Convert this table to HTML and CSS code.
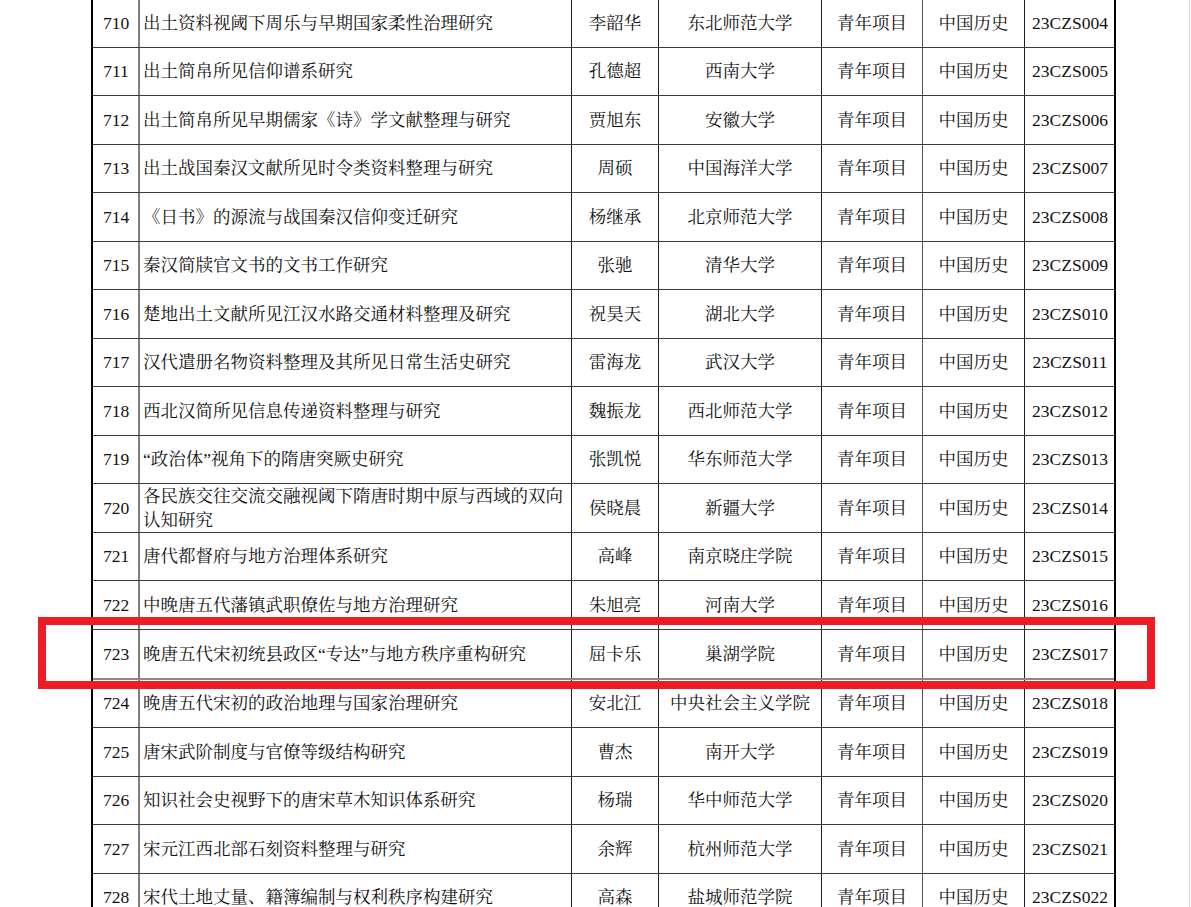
FILE: index.html
```html
<!DOCTYPE html>
<html lang="zh-CN">
<head>
<meta charset="utf-8">
<title>立项名单</title>
<link rel="stylesheet" href="styles.css">
</head>
<body>
<div class="page">
  <div class="sheet">
    <div class="row"><div class="c num">710</div><div class="c title">出土资料视阈下周乐与早期国家柔性治理研究</div><div class="c name">李韶华</div><div class="c org">东北师范大学</div><div class="c type">青年项目</div><div class="c subj">中国历史</div><div class="c code">23CZS004</div></div>
    <div class="row"><div class="c num">711</div><div class="c title">出土简帛所见信仰谱系研究</div><div class="c name">孔德超</div><div class="c org">西南大学</div><div class="c type">青年项目</div><div class="c subj">中国历史</div><div class="c code">23CZS005</div></div>
    <div class="row"><div class="c num">712</div><div class="c title">出土简帛所见早期儒家《诗》学文献整理与研究</div><div class="c name">贾旭东</div><div class="c org">安徽大学</div><div class="c type">青年项目</div><div class="c subj">中国历史</div><div class="c code">23CZS006</div></div>
    <div class="row"><div class="c num">713</div><div class="c title">出土战国秦汉文献所见时令类资料整理与研究</div><div class="c name">周硕</div><div class="c org">中国海洋大学</div><div class="c type">青年项目</div><div class="c subj">中国历史</div><div class="c code">23CZS007</div></div>
    <div class="row"><div class="c num">714</div><div class="c title">《日书》的源流与战国秦汉信仰变迁研究</div><div class="c name">杨继承</div><div class="c org">北京师范大学</div><div class="c type">青年项目</div><div class="c subj">中国历史</div><div class="c code">23CZS008</div></div>
    <div class="row"><div class="c num">715</div><div class="c title">秦汉简牍官文书的文书工作研究</div><div class="c name">张驰</div><div class="c org">清华大学</div><div class="c type">青年项目</div><div class="c subj">中国历史</div><div class="c code">23CZS009</div></div>
    <div class="row"><div class="c num">716</div><div class="c title">楚地出土文献所见江汉水路交通材料整理及研究</div><div class="c name">祝昊天</div><div class="c org">湖北大学</div><div class="c type">青年项目</div><div class="c subj">中国历史</div><div class="c code">23CZS010</div></div>
    <div class="row"><div class="c num">717</div><div class="c title">汉代遣册名物资料整理及其所见日常生活史研究</div><div class="c name">雷海龙</div><div class="c org">武汉大学</div><div class="c type">青年项目</div><div class="c subj">中国历史</div><div class="c code">23CZS011</div></div>
    <div class="row"><div class="c num">718</div><div class="c title">西北汉简所见信息传递资料整理与研究</div><div class="c name">魏振龙</div><div class="c org">西北师范大学</div><div class="c type">青年项目</div><div class="c subj">中国历史</div><div class="c code">23CZS012</div></div>
    <div class="row"><div class="c num">719</div><div class="c title">“政治体”视角下的隋唐突厥史研究</div><div class="c name">张凯悦</div><div class="c org">华东师范大学</div><div class="c type">青年项目</div><div class="c subj">中国历史</div><div class="c code">23CZS013</div></div>
    <div class="row"><div class="c num">720</div><div class="c title">各民族交往交流交融视阈下隋唐时期中原与西域的双向认知研究</div><div class="c name">侯晓晨</div><div class="c org">新疆大学</div><div class="c type">青年项目</div><div class="c subj">中国历史</div><div class="c code">23CZS014</div></div>
    <div class="row"><div class="c num">721</div><div class="c title">唐代都督府与地方治理体系研究</div><div class="c name">高峰</div><div class="c org">南京晓庄学院</div><div class="c type">青年项目</div><div class="c subj">中国历史</div><div class="c code">23CZS015</div></div>
    <div class="row"><div class="c num">722</div><div class="c title">中晚唐五代藩镇武职僚佐与地方治理研究</div><div class="c name">朱旭亮</div><div class="c org">河南大学</div><div class="c type">青年项目</div><div class="c subj">中国历史</div><div class="c code">23CZS016</div></div>
    <div class="row tall"><div class="c num">723</div><div class="c title">晚唐五代宋初统县政区“专达”与地方秩序重构研究</div><div class="c name">屈卡乐</div><div class="c org">巢湖学院</div><div class="c type">青年项目</div><div class="c subj">中国历史</div><div class="c code">23CZS017</div></div>
    <div class="row"><div class="c num">724</div><div class="c title">晚唐五代宋初的政治地理与国家治理研究</div><div class="c name">安北江</div><div class="c org">中央社会主义学院</div><div class="c type">青年项目</div><div class="c subj">中国历史</div><div class="c code">23CZS018</div></div>
    <div class="row"><div class="c num">725</div><div class="c title">唐宋武阶制度与官僚等级结构研究</div><div class="c name">曹杰</div><div class="c org">南开大学</div><div class="c type">青年项目</div><div class="c subj">中国历史</div><div class="c code">23CZS019</div></div>
    <div class="row"><div class="c num">726</div><div class="c title">知识社会史视野下的唐宋草木知识体系研究</div><div class="c name">杨瑞</div><div class="c org">华中师范大学</div><div class="c type">青年项目</div><div class="c subj">中国历史</div><div class="c code">23CZS020</div></div>
    <div class="row"><div class="c num">727</div><div class="c title">宋元江西北部石刻资料整理与研究</div><div class="c name">余辉</div><div class="c org">杭州师范大学</div><div class="c type">青年项目</div><div class="c subj">中国历史</div><div class="c code">23CZS021</div></div>
    <div class="row"><div class="c num">728</div><div class="c title">宋代土地丈量、籍簿编制与权利秩序构建研究</div><div class="c name">高森</div><div class="c org">盐城师范学院</div><div class="c type">青年项目</div><div class="c subj">中国历史</div><div class="c code">23CZS022</div></div>
  </div>
  <div class="highlight"></div>
</div>
</body>
</html>
```

FILE: styles.css
```css
* {
  box-sizing: border-box;
}

html, body {
  margin: 0;
  padding: 0;
  background: #ffffff;
}

body {
  overflow: hidden;
}

.page {
  position: relative;
  width: 1190px;
  height: 907px;
  border-right: 1px solid #d9d9d9;
  overflow: hidden;
  font-family: "Liberation Serif", "Noto Serif CJK SC", "Noto Sans CJK SC", serif;
  font-size: 17.5px;
  color: #111111;
}

.sheet {
  margin-left: 91px;
  margin-top: -1px;
  width: 1025px;
  border-left: 2px solid #000000;
  border-right: 2px solid #000000;
}

.row {
  display: grid;
  grid-template-columns: 47px 432px 87px 163px 101px 102px 89px;
  height: 48.5px;
  border-bottom: 1px solid #3c3c3c;
}

.row.tall {
  height: 50px;
  border-bottom: 2px solid #8a8a8a;
}

.c {
  display: flex;
  align-items: center;
  justify-content: center;
  border-right: 1px solid #1e1e1e;
  line-height: 24px;
  white-space: nowrap;
}

.c.num {
  border-right: 2px solid #7d7d7d;
  padding-left: 1px;
}

.c.title {
  justify-content: flex-start;
  padding-left: 3px;
  padding-right: 6px;
  white-space: normal;
}

.c.type {
  border-right-color: #555555;
}

.c.code {
  border-right: none;
  padding-left: 1px;
}

.highlight {
  position: absolute;
  left: 38px;
  top: 617px;
  width: 1117px;
  height: 72px;
  border: 8px solid #ee1c25;
}
```
